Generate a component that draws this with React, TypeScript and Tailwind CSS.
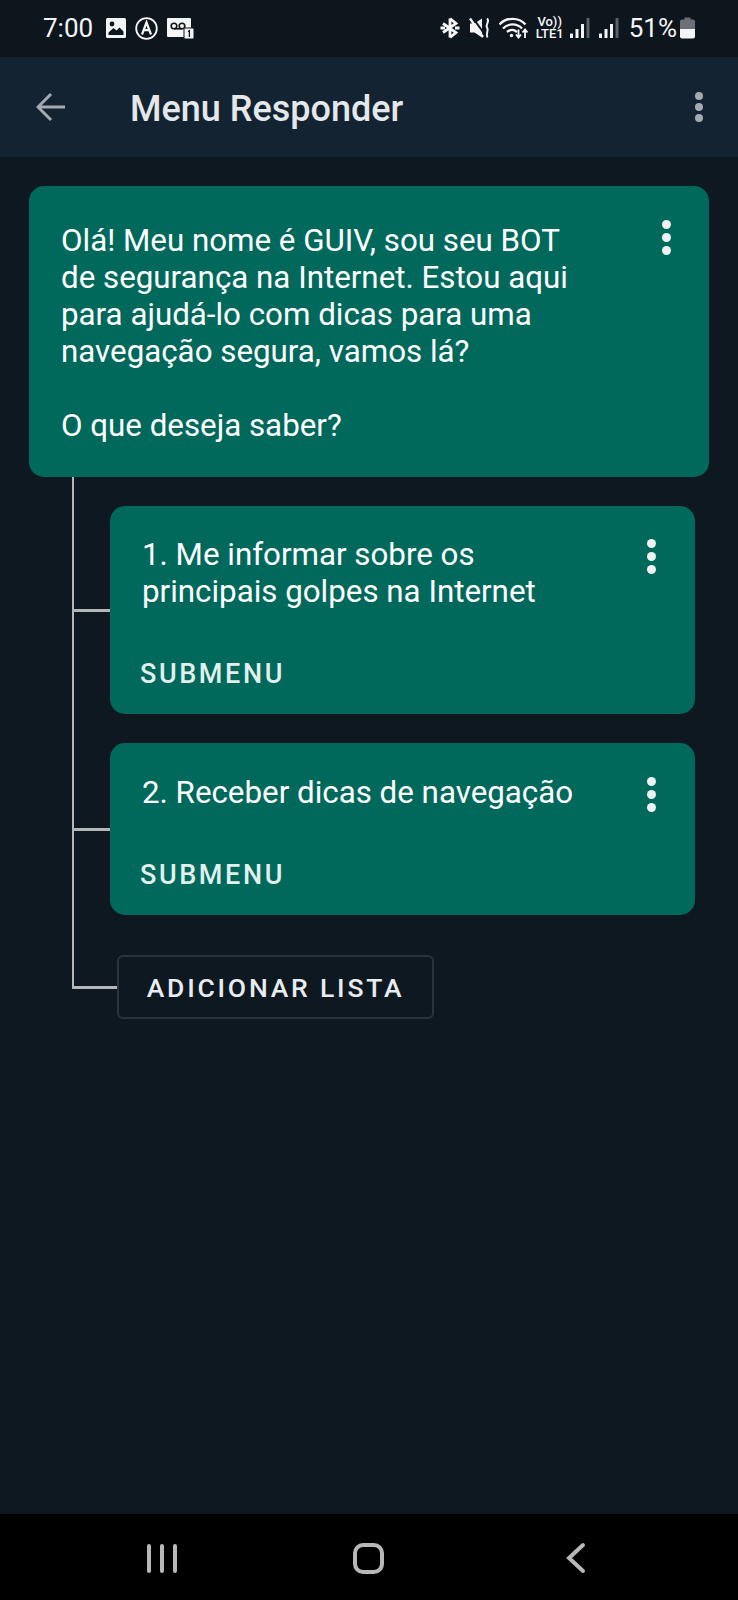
import React from 'react';

const PictureIcon = () => (
  <svg width="20" height="20" viewBox="0 0 20 20" fill="none">
    <rect width="20" height="20" rx="1.5" fill="#f4f5f6" />
    <circle cx="6" cy="6" r="2.4" fill="#0d151d" />
    <path d="M2.5 17 V14.5 L7.5 10 L10.5 12.5 L13.5 9.5 L17.5 13.5 V17 Z" fill="#0d151d" />
  </svg>
);

const AutoIcon = () => (
  <svg width="23" height="23" viewBox="0 0 23 23" fill="none">
    <circle cx="11.5" cy="11.5" r="10.3" stroke="#f4f5f6" strokeWidth="1.8" />
    <path d="M7 17.5 L11.5 5.5 L16 17.5 M8.6 13.2 H14.4" stroke="#f4f5f6" strokeWidth="2.2" />
  </svg>
);

const VoicemailIcon = () => (
  <svg width="27" height="22" viewBox="0 0 27 22" fill="none">
    <rect x="0" y="1" width="24" height="19" rx="1" fill="#f4f5f6" />
    <circle cx="7" cy="9" r="2.8" stroke="#0d151d" strokeWidth="1.6" />
    <circle cx="15" cy="9" r="2.8" stroke="#0d151d" strokeWidth="1.6" />
    <path d="M7 11.8 H15" stroke="#0d151d" strokeWidth="1.6" />
    <rect x="17" y="11" width="10" height="11" rx="1" fill="#f4f5f6" stroke="#0d151d" strokeWidth="1" />
    <path d="M21 14.5 L22.4 13.6 V20" stroke="#0d151d" strokeWidth="1.3" />
  </svg>
);

const BluetoothIcon = () => (
  <svg width="20" height="22" viewBox="0 0 20 22" fill="none" stroke="#f4f5f6">
    <path d="M10 1.5 L16 6.5 L3 15.5 M10 20.5 L16 15.5 L3 6.5 M10 1.5 V20.5" strokeWidth="2.8" />
    <path d="M0.5 11 H5 M15 11 H19.5" strokeWidth="3.2" />
  </svg>
);

const MuteIcon = () => (
  <svg width="22" height="22" viewBox="0 0 22 22" fill="none">
    <path d="M1 6.5 H5.5 L13 1.5 V20.5 L5.5 15.5 H1 Z" fill="#f4f5f6" />
    <path d="M3.5 0.5 L15.5 17" stroke="#0d151d" strokeWidth="2" />
    <path d="M1 1.5 L14 20" stroke="#f4f5f6" strokeWidth="2.2" />
    <path d="M18 1.5 C21.5 4.5 16 7 18 10.5 C20.5 13.5 16 16.5 18.5 20.5" stroke="#f4f5f6" strokeWidth="2" />
  </svg>
);

const WifiIcon = () => (
  <svg width="30" height="22" viewBox="0 0 30 22" fill="none" stroke="#f4f5f6" strokeWidth="2.3">
    <path d="M0.5 7.5 C7 0 20 0 26.5 7.5" />
    <path d="M4 11.5 C9 6 18 6 23 11.5" />
    <path d="M8 15 C11 12.5 15 12.5 18 15" />
    <circle cx="12.5" cy="18.5" r="1.7" fill="#f4f5f6" stroke="none" />
    <path d="M19.5 12.5 V20 M17 17.5 L19.5 20.5 L22 17.5" strokeWidth="1.8" />
    <path d="M26 21 V13 M23.5 15.5 L26 12.5 L28.5 15.5" strokeWidth="1.8" />
  </svg>
);

const SignalIcon = () => (
  <svg width="20" height="22" viewBox="0 0 20 22">
    <rect x="0" y="16.5" width="3" height="4.5" rx="0.5" fill="#f4f5f6" />
    <rect x="5.5" y="12" width="3" height="9" fill="#f4f5f6" />
    <rect x="11" y="7" width="3" height="14" fill="#f4f5f6" />
    <rect x="16.5" y="1" width="3" height="20" fill="#5b6167" />
  </svg>
);

const BatteryIcon = () => (
  <svg width="15" height="22" viewBox="0 0 15 22">
    <path d="M4.5 0.5 H10.5 V2.5 H13 A2 2 0 0 1 15 4.5 V12 H0 V4.5 A2 2 0 0 1 2 2.5 H4.5 Z" fill="#6b7177" />
    <path d="M0 12 H15 V19.5 A2 2 0 0 1 13 21.5 H2 A2 2 0 0 1 0 19.5 Z" fill="#f4f5f6" />
  </svg>
);

const Kebab = ({ className }: { className: string }) => (
  <div className={`flex flex-col items-center gap-[4px] shrink-0 ${className}`}>
    <span className="w-[9px] h-[9px] rounded-full bg-[#eef3f2]" />
    <span className="w-[9px] h-[9px] rounded-full bg-[#eef3f2]" />
    <span className="w-[9px] h-[9px] rounded-full bg-[#eef3f2]" />
  </div>
);

const Connector = ({ width }: { width: string }) => (
  <div className={`h-[3px] bg-[#b4b6b8] shrink-0 ${width}`} />
);

const App: React.FC = () => {
  return (
    <div
      className="w-[738px] h-[1600px] flex flex-col bg-[#0e1820] overflow-hidden"
      style={{ fontFamily: 'Roboto, sans-serif' }}
    >
      {/* Status bar */}
      <div className="h-[57px] bg-[#0d151d] flex items-center pl-[43px] pr-[43px] pb-[1px] text-[#f4f5f6]">
        <span className="text-[26px] leading-none w-[51px]">7:00</span>
        <div className="ml-[12px] flex items-center gap-[9px]">
          <PictureIcon />
          <AutoIcon />
          <VoicemailIcon />
        </div>
        <div className="ml-auto flex items-center">
          <BluetoothIcon />
          <div className="ml-[9px]"><MuteIcon /></div>
          <div className="ml-[8px]"><WifiIcon /></div>
          <div className="ml-[7px] flex flex-col items-center text-[13px] leading-[12px] font-medium">
            <span>Vo))</span>
            <span>LTE1</span>
          </div>
          <div className="ml-[6px]"><SignalIcon /></div>
          <div className="ml-[9px]"><SignalIcon /></div>
          <span className="ml-[10px] text-[26px] leading-none">51%</span>
          <div className="ml-[3px]"><BatteryIcon /></div>
        </div>
      </div>

      {/* Header */}
      <div className="h-[100px] bg-[#132331] flex items-center pl-[36px] pr-[35px]">
        <svg width="30" height="30" viewBox="0 0 30 30" fill="none" stroke="#a3aab0" strokeWidth="3" className="shrink-0">
          <path d="M29 15 H3 M15 2 L2 15 L15 28" />
        </svg>
        <h1 className="ml-[64px] pt-[4px] text-[36px] leading-none font-medium text-[#e4e8eb]">Menu Responder</h1>
        <div className="ml-auto flex flex-col gap-[3px]">
          <span className="w-[8px] h-[8px] rounded-full bg-[#a3aab0]" />
          <span className="w-[8px] h-[8px] rounded-full bg-[#a3aab0]" />
          <span className="w-[8px] h-[8px] rounded-full bg-[#a3aab0]" />
        </div>
      </div>

      {/* Main */}
      <div className="flex-1 flex flex-col pt-[29px] pl-[29px] pr-[29px]">
        <div className="h-[291px] rounded-[15px] bg-[#00695c] flex justify-between pl-[32px] pr-[38px] pt-[36px] text-white">
          <p className="text-[31.3px] leading-[37px]">
            Olá! Meu nome é GUIV, sou seu BOT
            <br />
            de segurança na Internet. Estou aqui
            <br />
            para ajudá-lo com dicas para uma
            <br />
            navegação segura, vamos lá?
            <br />
            <br />
            O que deseja saber?
          </p>
          <Kebab className="mt-[-2px]" />
        </div>

        {/* Tree */}
        <div className="relative ml-[43px] pt-[29px] flex flex-col">
          <div className="absolute left-0 top-0 bottom-[30px] w-[2px] bg-[#b4b6b8]" />

          <div className="flex items-center">
            <Connector width="w-[38px]" />
            <div className="w-[585px] h-[208px] rounded-[15px] bg-[#00695c] flex flex-col pl-[32px] pr-[39px] pt-[30px] text-white">
              <div className="flex justify-between">
                <p className="text-[31.3px] leading-[37px]">
                  1. Me informar sobre os
                  <br />
                  principais golpes na Internet
                </p>
                <Kebab className="mt-[3px]" />
              </div>
              <span className="mt-[49px] ml-[-2px] text-[27px] leading-[30px] font-medium tracking-[2.6px] text-[#e3f0ed]">SUBMENU</span>
            </div>
          </div>

          <div className="flex items-center mt-[29px]">
            <Connector width="w-[38px]" />
            <div className="w-[585px] h-[172px] rounded-[15px] bg-[#00695c] flex flex-col pl-[32px] pr-[39px] pt-[31px] text-white">
              <div className="flex justify-between">
                <p className="text-[31.3px] leading-[37px]">2. Receber dicas de navegação</p>
                <Kebab className="mt-[3px]" />
              </div>
              <span className="mt-[48px] ml-[-2px] text-[27px] leading-[30px] font-medium tracking-[2.6px] text-[#e3f0ed]">SUBMENU</span>
            </div>
          </div>

          <div className="flex items-center mt-[40px]">
            <Connector width="w-[45px]" />
            <button className="w-[317px] h-[64px] pt-[2px] rounded-[6px] border-2 border-[#2a333c] bg-[#0e1820] text-[26.5px] font-medium tracking-[2.8px] text-[#e8ecef]">
              ADICIONAR LISTA
            </button>
          </div>
        </div>
      </div>

      {/* Nav bar */}
      <div className="h-[86px] bg-black flex items-center pt-[2px]">
        <div className="ml-[147px] flex gap-[9px]">
          <span className="w-[4px] h-[29px] rounded-full bg-[#b8b8b8]" />
          <span className="w-[4px] h-[29px] rounded-full bg-[#b8b8b8]" />
          <span className="w-[4px] h-[29px] rounded-full bg-[#b8b8b8]" />
        </div>
        <div className="ml-[176px] w-[31px] h-[31px] rounded-[10px] border-[4px] border-[#b8b8b8]" />
        <svg width="20" height="32" viewBox="0 0 20 32" fill="none" stroke="#b8b8b8" strokeWidth="4" strokeLinecap="round" className="ml-[182px]">
          <path d="M17 3 L3 16 L17 29" />
        </svg>
      </div>
    </div>
  );
};

export default App;
